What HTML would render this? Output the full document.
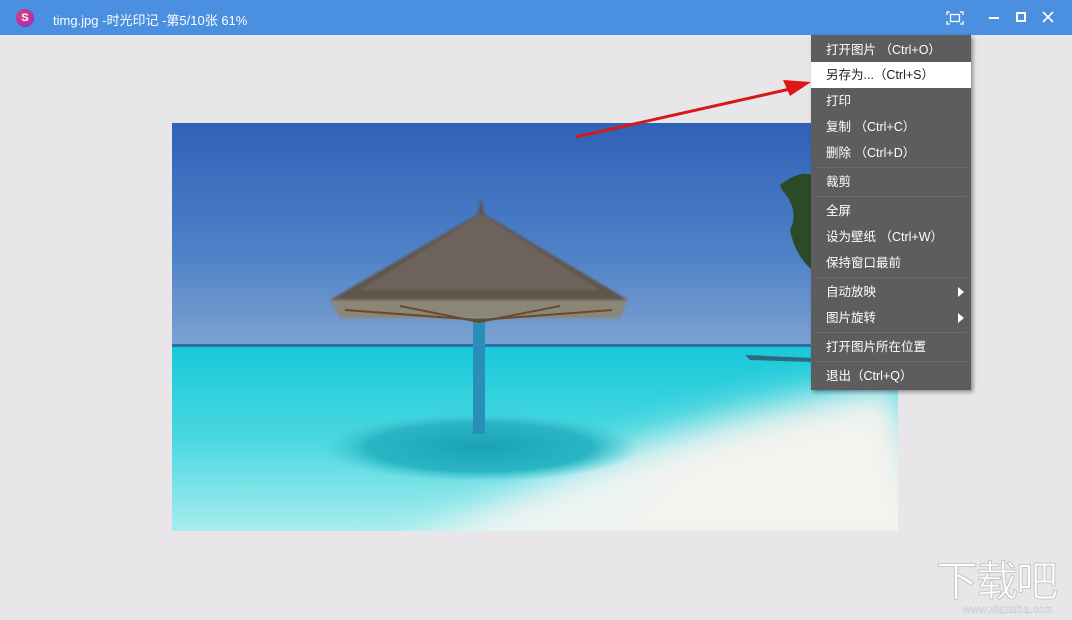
<!DOCTYPE html>
<html><head><meta charset="utf-8"><style>
*{margin:0;padding:0;box-sizing:border-box}
body{width:1072px;height:620px;overflow:hidden;background:#e8e6e9;font-family:"Liberation Sans","Noto Sans CJK SC",sans-serif;position:relative}
.tb{position:absolute;left:0;top:0;width:1072px;height:35px;background:#4a8fe0}
.title{position:absolute;left:53px;top:10px;color:#fff;font-size:13px}
.menu{position:absolute;left:811px;top:35px;width:160px;height:355px;background:#5d5c5e;box-shadow:2px 2px 4px rgba(0,0,0,.4)}
.it{position:absolute;left:0;width:160px;height:26px;line-height:26px;padding-left:15px;color:#fff;font-size:12.5px;white-space:pre}
.hl{background:#fff;color:#222}
.sep{position:absolute;left:5px;width:150px;height:1px;background:#6c6b6d}
.tri{position:absolute;right:7px;top:8px;width:0;height:0;border-left:6px solid #fff;border-top:5px solid transparent;border-bottom:5px solid transparent}
</style></head><body>
<div class="tb">
<div style="position:absolute;left:16px;top:9px;width:18px;height:18px;border-radius:50%;background:radial-gradient(circle at 40% 35%,#e8407a,#8a2bc0);color:#fff;font-size:11px;font-weight:bold;text-align:center;line-height:18px">S</div>
<div class="title">timg.jpg -时光印记 -第5/10张 61%</div>
<svg style="position:absolute;left:945px;top:10px" width="20" height="16" viewBox="0 0 20 16"><path d="M2 5V2h3M15 2h3v3M18 11v3h-3M5 14H2v-3" fill="none" stroke="#fff" stroke-width="1.3"/><rect x="5.5" y="4.5" width="9" height="7" fill="none" stroke="#fff" stroke-width="1.3"/></svg>
<div style="position:absolute;left:989px;top:17px;width:10px;height:1.5px;background:#fff"></div>
<div style="position:absolute;left:1016px;top:12px;width:10px;height:10px;border:2px solid #fff"></div>
<svg style="position:absolute;left:1042px;top:11px" width="12" height="12"><path d="M1 1L11 11M11 1L1 11" stroke="#fff" stroke-width="1.6"/></svg>
</div>
<svg style="position:absolute;left:172px;top:123px" width="726" height="408" viewBox="172 123 726 408">
<defs>
<linearGradient id="sky" x1="0" y1="0" x2="0" y2="1"><stop offset="0" stop-color="#2f62b8"/><stop offset=".6" stop-color="#4f82c8"/><stop offset="1" stop-color="#7fa2d2"/></linearGradient>
<linearGradient id="sea" x1="0" y1="0" x2="0" y2="1"><stop offset="0" stop-color="#18c8da"/><stop offset=".5" stop-color="#4ad8e0"/><stop offset="1" stop-color="#a8ecee"/></linearGradient>
<linearGradient id="sand" x1="0" y1="0" x2="1" y2="1"><stop offset="0" stop-color="#d8f2f2" stop-opacity="0"/><stop offset=".5" stop-color="#eaf4f3"/><stop offset="1" stop-color="#f3f1ec"/></linearGradient>
<radialGradient id="sh"><stop offset="0" stop-color="#1aa2b4"/><stop offset=".7" stop-color="#2ab5c4"/><stop offset="1" stop-color="#45cdd6" stop-opacity="0"/></radialGradient>
<filter id="bl"><feGaussianBlur stdDeviation="18"/></filter>
<filter id="b2"><feGaussianBlur stdDeviation="1.2"/></filter>
</defs>
<rect x="172" y="123" width="726" height="223" fill="url(#sky)"/>
<rect x="172" y="344" width="726" height="3" fill="#2a72a8"/>
<rect x="172" y="347" width="726" height="184" fill="url(#sea)"/>
<g filter="url(#bl)">
<path d="M898 380 L940 560 L380 560 Q520 490 640 445 Q760 405 898 380Z" fill="#eef4f2"/>
<path d="M600 560 Q640 480 720 440 Q800 410 898 400 L940 560Z" fill="#f4f3ef"/>
</g>
<ellipse cx="480" cy="447" rx="160" ry="35" fill="url(#sh)"/>
<rect x="473" y="318" width="12" height="116" fill="#2a8fb8"/>
<g filter="url(#b2)">
<path d="M481 197 L484 214 L628 300 L620 316 L340 316 L330 300 L478 214Z" fill="#5e544c"/>
<path d="M481 214 L600 290 L360 290Z" fill="#7a7068" opacity=".6"/>
<path d="M330 300 L628 300 L620 318 L340 318Z" fill="#8a8678"/>
</g>
<path d="M345 310 L479 320 L612 310" fill="none" stroke="#6b4a2a" stroke-width="2"/>
<path d="M400 306 L479 322 L560 306" fill="none" stroke="#6b4a2a" stroke-width="2"/>
<path d="M780 185 Q800 170 812 175 L812 270 Q795 255 790 230 Q800 210 782 190Z" fill="#2c4a28"/>
<path d="M745 355 L812 358 L812 362 L750 360Z" fill="#2d6a80"/>
</svg>
<svg style="position:absolute;left:0;top:0" width="1072" height="620"><path d="M576 137 L790 89" stroke="#d81818" stroke-width="3"/><path d="M811 82 L783 80 L790 96Z" fill="#e01515"/></svg>
<div class="menu">
<div class="it" style="top:2px">打开图片 （Ctrl+O）</div>
<div class="it hl" style="top:27px">另存为...（Ctrl+S）</div>
<div class="it" style="top:53px">打印</div>
<div class="it" style="top:79px">复制 （Ctrl+C）</div>
<div class="it" style="top:105px">删除 （Ctrl+D）</div>
<div class="sep" style="top:132px"></div>
<div class="it" style="top:134px">裁剪</div>
<div class="sep" style="top:161px"></div>
<div class="it" style="top:163px">全屏</div>
<div class="it" style="top:189px">设为壁纸 （Ctrl+W）</div>
<div class="it" style="top:215px">保持窗口最前</div>
<div class="sep" style="top:242px"></div>
<div class="it" style="top:244px">自动放映<div class="tri"></div></div>
<div class="it" style="top:270px">图片旋转<div class="tri"></div></div>
<div class="sep" style="top:297px"></div>
<div class="it" style="top:299px">打开图片所在位置</div>
<div class="sep" style="top:326px"></div>
<div class="it" style="top:328px">退出（Ctrl+Q）</div>
</div>
<div style="position:absolute;left:936px;top:560px;font-size:42px;color:#fff;-webkit-text-stroke:1px #c8c6c8;letter-spacing:-2px;line-height:44px">下载吧</div>
<div style="position:absolute;left:963px;top:604px;font-size:11px;color:#fff;-webkit-text-stroke:.5px #c8c6c8">www.xiazaiba.com</div>
</body></html>
